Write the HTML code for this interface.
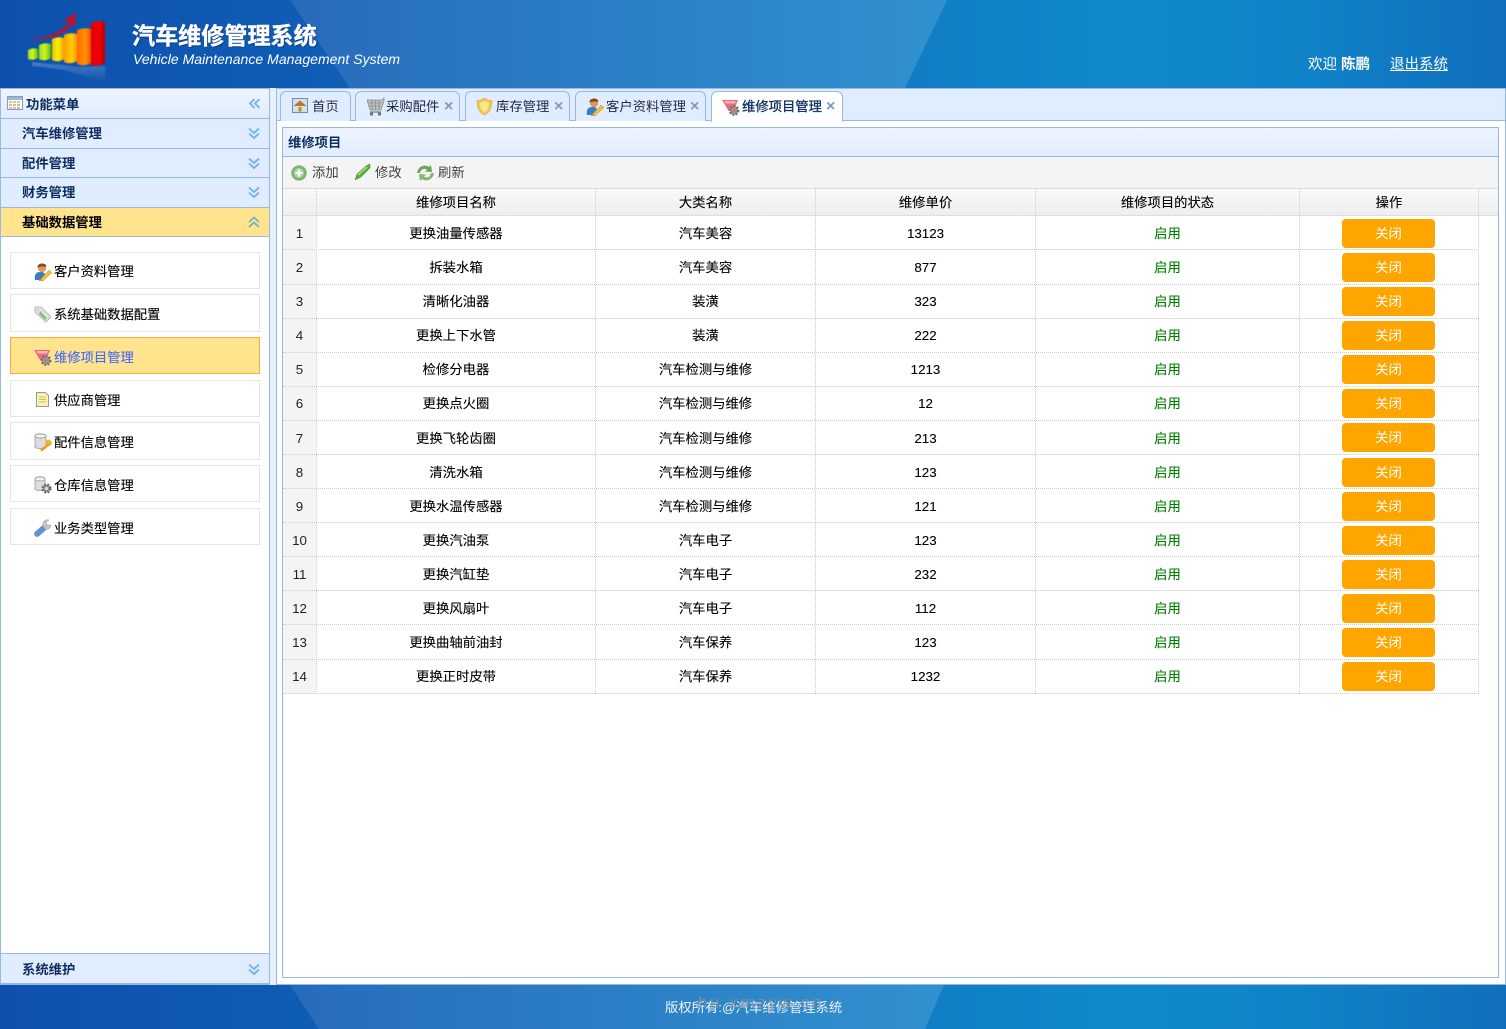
<!DOCTYPE html>
<html lang="zh"><head><meta charset="utf-8"><title>汽车维修管理系统</title>
<style>
*{box-sizing:border-box}
html,body{margin:0;padding:0;width:1506px;height:1029px;overflow:hidden;background:#fff;font-family:"Liberation Sans","Noto Sans CJK SC",sans-serif;font-size:13.33px;color:#000}
.a{position:absolute;white-space:nowrap}
svg{display:block;overflow:visible}
svg.ic{filter:blur(.3px)}
.hdr{left:0;top:0;width:1506px;height:88px;background:linear-gradient(90deg,#0e50ae 0,#0f5cb4 300px,#1089cc 1120px,#1083c9 1300px,#106fbc 1506px)}
.mi{left:1px;width:268px;height:29px;background:#e0ecff;border-bottom:1px solid #95b8e7;font-weight:bold;color:#0e2d5f;line-height:28px;padding-left:21px;padding-top:1px}
.it{left:10px;width:250px;border:1px solid #e5e5e5;background:#fff;line-height:36px;padding-left:43px;padding-top:2px;height:37px;color:#000;letter-spacing:-.04px;-webkit-text-stroke:.12px #000}
.tab{top:91px;height:30px;border:1px solid #95b8e7;border-bottom:0;border-radius:6px 6px 0 0;background:#e0ecff;line-height:29px;color:#1f2a44}
.x{position:absolute;top:7px;line-height:15px;color:#7f99be;font-weight:bold;font-size:16px;font-family:"Liberation Sans",sans-serif;-webkit-text-stroke:0}
.c{position:absolute;text-align:center;line-height:20px;height:20px;margin-top:1px;-webkit-text-stroke:.12px #000}
.vl{position:absolute;top:189px;height:505px;width:0;border-left:1px dotted #ccc}
.hl{position:absolute;left:283px;width:1196px;height:0;border-top:1px dotted #ccc}
.btn{position:absolute;left:1342px;width:93px;height:29px;background:#ffa500;border-radius:4px;color:#fff;text-align:center;line-height:29px}
.c.g{color:#008000;-webkit-text-stroke:.12px #008000}
.n{position:absolute;left:283px;width:33px;text-align:center;color:#222;height:20px;line-height:20px;margin-top:1px}
</style></head><body>

<div class="a hdr"></div>
<svg class="a" style="left:0;top:0" width="1506" height="88"><defs><linearGradient id="ov" x1="0" x2="1" y1="0" y2="0"><stop offset="0" stop-color="#fff" stop-opacity=".1"/><stop offset="1" stop-color="#fff" stop-opacity=".14"/></linearGradient></defs><polygon points="290,0 947,0 905,88 350,88" fill="url(#ov)"/></svg>

<!-- logo -->
<svg class="a" style="left:20px;top:8px;filter:blur(.6px)" width="100" height="80" viewBox="0 0 100 80">
<defs>
<linearGradient id="l1" x1="0" x2="1"><stop offset="0" stop-color="#9be018"/><stop offset=".5" stop-color="#d0f420"/><stop offset="1" stop-color="#5cb810"/></linearGradient>
<linearGradient id="l2" x1="0" x2="1"><stop offset="0" stop-color="#e8c000"/><stop offset=".5" stop-color="#fff000"/><stop offset="1" stop-color="#f0a000"/></linearGradient>
<linearGradient id="l3" x1="0" x2="1"><stop offset="0" stop-color="#ff9a00"/><stop offset=".6" stop-color="#ffd000"/><stop offset="1" stop-color="#ff9000"/></linearGradient>
<linearGradient id="l4" x1="0" x2="1"><stop offset="0" stop-color="#ff6a00"/><stop offset=".6" stop-color="#ff9400"/><stop offset="1" stop-color="#f05000"/></linearGradient>
<linearGradient id="l5" x1="0" x2="1"><stop offset="0" stop-color="#e00010"/><stop offset=".6" stop-color="#f40000"/><stop offset="1" stop-color="#b80000"/></linearGradient>
<linearGradient id="rf" x1="0" x2="0" y1="0" y2="1"><stop offset="0" stop-color="#fff" stop-opacity=".24"/><stop offset="1" stop-color="#fff" stop-opacity="0"/></linearGradient>
</defs>
<path d="M8 31 C28 30 42 24 49 14 L44 12 L56 5 L55 19 L52 16 C44 27 28 33 8 31Z" fill="#c0102c"/>
<path d="M8 42 Q13 39 18 41 L18 50 Q13 53 8 51Z" fill="url(#l1)"/>
<path d="M19 37 Q25 34 31 36 L31 50 Q25 54 19 51Z" fill="url(#l1)"/>
<path d="M32 31 Q38 28 44 30 L44 51 Q38 55 32 52Z" fill="url(#l2)"/>
<path d="M44 27 Q50 24 57 26 L57 53 Q50 57 44 54Z" fill="url(#l3)"/>
<path d="M57 22 Q64 19 71 21 L71 55 Q64 59 57 56Z" fill="url(#l4)"/>
<path d="M71 15 Q78 12 85 14 L85 55 Q78 59 71 57Z" fill="url(#l5)"/>
<path d="M12 54 L30 56 L44 57 L57 59 L85 58 L85 74 L71 70 L44 62 L12 58Z" fill="url(#rf)"/>
</svg>

<div class="a" style="left:132px;top:19px;font-size:23.1px;font-weight:bold;color:#fff;line-height:34px;-webkit-text-stroke:.4px #fff;text-shadow:1px 1px 1px rgba(0,30,90,.5)">汽车维修管理系统</div>
<div class="a" style="left:133px;top:50px;font-size:14px;font-style:italic;color:#fff;line-height:19px;letter-spacing:.04px">Vehicle Maintenance Management System</div>
<div class="a" style="left:1308px;top:55px;color:#fff;line-height:20px;font-size:14.5px">欢迎&nbsp;<b>陈鹏</b></div>
<div class="a" style="left:1390px;top:55px;color:#fff;line-height:20px;font-size:14.5px;text-decoration:underline">退出系统</div>

<!-- frame bg -->
<div class="a" style="left:0;top:88px;width:1506px;height:897px;background:#e8f0fc"></div>
<div class="a" style="left:0;top:88px;width:270px;height:897px;background:#fff;border:1px solid #95b8e7"></div>
<div class="a" style="left:276px;top:88px;width:1230px;height:897px;background:#fff;border:1px solid #95b8e7"></div>

<!-- sidebar -->
<div class="a mi" style="top:89px;height:30px;padding-left:25px;line-height:29px;background:linear-gradient(180deg,#eff5ff,#e0ecff)">功能菜单</div>
<svg class="a ic" style="left:7px;top:96px" width="16" height="15" viewBox="0 0 16 15"><rect x=".5" y=".5" width="15" height="13" fill="#fff" stroke="#8a9db8"/><rect x="1" y="1" width="14" height="3" fill="#9db8dc"/><path d="M2 5h3v2H2zM6 5h3v2H6zM10 5h3v2h-3z" fill="#f2c27a"/><path d="M2 8h3v2H2zM6 8h3v2H6zM10 8h3v2h-3z" fill="#a8cfa0"/><path d="M2 11h3v2H2zM6 11h3v2H6zM10 11h3v2h-3z" fill="#e8b0b8"/></svg>
<svg class="a" style="left:249px;top:98px" width="12" height="12" viewBox="0 0 12 12"><path d="M5.500 1 1 5.500 5.500 10M10.500 1 6 5.500 10.500 10" fill="none" stroke="#6fb0f0" stroke-width="1.800"/></svg>

<div class="a mi" style="top:119px;height:30px;line-height:28px">汽车维修管理</div>
<div class="a mi" style="top:149px;height:29px;line-height:28px">配件管理</div>
<div class="a mi" style="top:178px;height:30px;line-height:28px">财务管理</div>
<div class="a mi" style="top:208px;height:29px;line-height:28px;background:#ffe48d;color:#000">基础数据管理</div>
<svg class="a" style="left:248px;top:127px" width="12" height="13" viewBox="0 0 12 13"><path d="M1 1.500 6 6l5-4.500M1 6.500 6 11l5-4.500" fill="none" stroke="#6fb0f0" stroke-width="1.800"/></svg>
<svg class="a" style="left:248px;top:157px" width="12" height="13" viewBox="0 0 12 13"><path d="M1 1.500 6 6l5-4.500M1 6.500 6 11l5-4.500" fill="none" stroke="#6fb0f0" stroke-width="1.800"/></svg>
<svg class="a" style="left:248px;top:186px" width="12" height="13" viewBox="0 0 12 13"><path d="M1 1.500 6 6l5-4.500M1 6.500 6 11l5-4.500" fill="none" stroke="#6fb0f0" stroke-width="1.800"/></svg>
<svg class="a" style="left:248px;top:216px" width="12" height="13" viewBox="0 0 12 13"><path d="M1 6 6 1.500 11 6M1 11 6 6.500 11 11" fill="none" stroke="#7bb0c8" stroke-width="1.800"/></svg>

<div class="a it" style="top:252px;padding-top:1px">客户资料管理</div>
<div class="a it" style="top:294px;height:38px">系统基础数据配置</div>
<div class="a it" style="top:337px;background:#ffe48d;border-color:#ffab3f;color:#416aff;-webkit-text-stroke:.12px #416aff">维修项目管理</div>
<div class="a it" style="top:380px">供应商管理</div>
<div class="a it" style="top:422px;height:38px">配件信息管理</div>
<div class="a it" style="top:465px">仓库信息管理</div>
<div class="a it" style="top:508px">业务类型管理</div>

<!-- sidebar icons -->
<svg class="a ic" style="left:34px;top:263px" width="18" height="18" viewBox="0 0 18 18"><path d="M1 17c-1-5 1-8 5-8h3l3 3-4 5Z" fill="#3d7cc4"/><circle cx="8" cy="5" r="4.200" fill="#d89a60"/><path d="M3.500 4.500C3 0 11-1 12.500 3c-.5 1-2 .5-4 .5S5 4 3.500 4.500Z" fill="#8a4a14"/><path d="M6 17 15 7l3 2.500L9 18Z" fill="#f0c040" stroke="#c4942a" stroke-width=".5"/><path d="M5 18l1-3 2.500 2.500Z" fill="#c08030"/></svg>
<svg class="a ic" style="left:34px;top:306px" width="18" height="17" viewBox="0 0 18 17"><path d="M1 1h6l10 10-5 5L1 6Z" fill="#dfe6df" stroke="#bbb"/><path d="M6 5l7 7-2 2-6-6Z" fill="#8fbe7a"/><circle cx="3.500" cy="3.500" r="1" fill="#fff" stroke="#999" stroke-width=".5"/></svg>
<svg class="a ic" style="left:34px;top:349px" width="19" height="18" viewBox="0 0 19 18"><path d="M0 1h16l-4 10H6Z" fill="#ef6a78"/><path d="M2 2h12l-1 2.500H4Z" fill="#f9b0b8"/><circle cx="12" cy="11.500" r="4.200" fill="#9a9a9a" stroke="#6e6e6e" stroke-width="2.500" stroke-dasharray="1.800 1.400"/><circle cx="12" cy="11.500" r="1.600" fill="#d9745c"/></svg>
<svg class="a ic" style="left:36px;top:392px" width="14" height="15" viewBox="0 0 14 15"><path d="M.5.500h9l3 3v11H.500Z" fill="#fbf3b0" stroke="#999"/><path d="M3 5h7M3 7.500h7M3 10h7" stroke="#c9bd6a"/></svg>
<svg class="a ic" style="left:34px;top:433px" width="18" height="19" viewBox="0 0 18 19"><path d="M1 3c0-3 11-3 11 0v11c0 2-11 2-11 0Z" fill="#dcdcdc" stroke="#aaa"/><ellipse cx="6.500" cy="3" rx="5.500" ry="2" fill="#f4f4f4" stroke="#aaa"/><circle cx="14.500" cy="10" r="3.200" fill="#eeb030"/><path d="M13 11 6 17l2 1.500 7-6Z" fill="#e8a020"/></svg>
<svg class="a ic" style="left:34px;top:476px" width="18" height="18" viewBox="0 0 18 18"><path d="M1 3c0-3 10-3 10 0v10c0 2-10 2-10 0Z" fill="#dcdcdc" stroke="#aaa"/><ellipse cx="6" cy="3" rx="5" ry="2" fill="#f4f4f4" stroke="#aaa"/><circle cx="12.500" cy="12.500" r="3.800" fill="#999" stroke="#666" stroke-width="2.500" stroke-dasharray="1.800 1.300"/><circle cx="12.500" cy="12.500" r="1.500" fill="#e4e4e4"/></svg>
<svg class="a ic" style="left:34px;top:519px" width="18" height="18" viewBox="0 0 18 18"><path d="M1 13 9 6l4 4-8 7c-3 2-6-1-4-4Z" fill="#5f92d8" stroke="#7a90aa" stroke-width=".5"/><path d="M9 7c-1-4 2-7 6-6l-3 2.500 1 2.500 4 0c0 3-3 5.500-6 4Z" fill="#c4c4c4" stroke="#999" stroke-width=".5"/></svg>

<div class="a" style="left:1px;top:953px;width:268px;height:31px;background:#e0ecff;border-top:1px solid #95b8e7;border-bottom:1px solid #95b8e7;font-weight:bold;color:#0e2d5f;line-height:29px;padding-left:21px;padding-top:1px">系统维护</div>
<svg class="a" style="left:248px;top:963px" width="12" height="13" viewBox="0 0 12 13"><path d="M1 1.500 6 6l5-4.500M1 6.500 6 11l5-4.500" fill="none" stroke="#6fb0f0" stroke-width="1.800"/></svg>

<!-- tabs bar -->
<div class="a" style="left:277px;top:89px;width:1228px;height:32px;background:#e0ecff;border-bottom:1px solid #95b8e7"></div>
<div class="a tab" style="left:280px;width:71px;padding-left:31px">首页</div>
<div class="a tab" style="left:355px;width:105px;padding-left:30px">采购配件<span class="x" style="left:88px">×</span></div>
<div class="a tab" style="left:465px;width:105px;padding-left:30px">库存管理<span class="x" style="left:88px">×</span></div>
<div class="a tab" style="left:575px;width:131px;padding-left:30px">客户资料管理<span class="x" style="left:114px">×</span></div>
<div class="a tab" style="left:711px;width:132px;height:31px;padding-left:30px;background:#fff;color:#0e2d5f;-webkit-text-stroke:.3px #0e2d5f">维修项目管理<span class="x" style="left:114px">×</span></div>

<!-- tab icons -->
<svg class="a ic" style="left:292px;top:98px" width="16" height="15" viewBox="0 0 16 15"><rect x=".5" y=".5" width="15" height="14" fill="#cfe0f2" stroke="#6a8fb8"/><path d="M1.500 8 8 2.500 14.500 8Z" fill="#c07030"/><rect x="3.500" y="8" width="9" height="5.500" fill="#f0e2b0"/><rect x="6.500" y="9" width="3" height="4.500" fill="#80a060"/></svg>
<svg class="a ic" style="left:366px;top:98px" width="19" height="18" viewBox="0 0 19 18"><path d="M1 2h15l2-2v3l-3 9H4Z" fill="#c0c4c0" stroke="#8a8a8a" stroke-width=".7"/><path d="M2 5h14M3 8h12M6 2v10M9.500 2v10M13 2v10" stroke="#8e8e8e" stroke-width=".8"/><path d="M4 14h11" stroke="#777" stroke-width="1.200"/><circle cx="5.500" cy="16" r="1.700" fill="#777"/><circle cx="13.500" cy="16" r="1.700" fill="#777"/></svg>
<svg class="a ic" style="left:477px;top:98px" width="15" height="17" viewBox="0 0 15 17"><path d="M7.500 0C10 2 12 2.500 15 2.500c0 7-2 12-7.500 14.500C2 14.500 0 9.500 0 2.500 3 2.500 5 2 7.500 0Z" fill="#eec850" stroke="#d8a830" stroke-width=".6"/><path d="M7.500 3c1.500 1 3 1.500 4.500 1.500 0 5-1.500 8-4.500 10C4.500 12.500 3 9.500 3 4.500 4.500 4.500 6 4 7.500 3Z" fill="#fbe78a"/></svg>
<svg class="a ic" style="left:586px;top:98px" width="18" height="18" viewBox="0 0 18 18"><path d="M1 17c-1-5 1-8 5-8h3l3 3-4 5Z" fill="#3d7cc4"/><circle cx="8" cy="5" r="4.200" fill="#d89a60"/><path d="M3.500 4.500C3 0 11-1 12.500 3c-.5 1-2 .5-4 .5S5 4 3.500 4.500Z" fill="#8a4a14"/><path d="M6 17 15 7l3 2.500L9 18Z" fill="#f0c040" stroke="#c4942a" stroke-width=".5"/><path d="M5 18l1-3 2.500 2.500Z" fill="#c08030"/></svg>
<svg class="a ic" style="left:722px;top:99px" width="19" height="18" viewBox="0 0 19 18"><path d="M0 1h16l-4 10H6Z" fill="#ef6a78"/><path d="M2 2h12l-1 2.500H4Z" fill="#f9b0b8"/><circle cx="12" cy="11.500" r="4.200" fill="#9a9a9a" stroke="#6e6e6e" stroke-width="2.500" stroke-dasharray="1.800 1.400"/><circle cx="12" cy="11.500" r="1.600" fill="#d9745c"/></svg>

<!-- panel -->
<div class="a" style="left:282px;top:127px;width:1217px;height:851px;border:1px solid #95b8e7;background:#fff"></div>
<div class="a" style="left:283px;top:128px;width:1215px;height:29px;background:linear-gradient(180deg,#eff5ff,#e0ecff);border-bottom:1px solid #95b8e7;font-weight:bold;color:#0e2d5f;line-height:28px;padding-left:5px;padding-top:1px">维修项目</div>
<div class="a" style="left:283px;top:157px;width:1215px;height:32px;background:#f4f4f4;border-bottom:1px solid #ddd"></div>
<svg class="a ic" style="left:291px;top:165px" width="16" height="16" viewBox="0 0 16 16"><circle cx="8" cy="8" r="7.500" fill="#7cb472" stroke="#9aaa9a" stroke-width=".6"/><circle cx="8" cy="8" r="5" fill="#a9d69c"/><path d="M8 4.500v7M4.500 8h7" stroke="#fff" stroke-width="2.200"/></svg>
<div class="a" style="left:312px;top:163px;line-height:20px;color:#444">添加</div>
<svg class="a ic" style="left:355px;top:164px" width="16" height="16" viewBox="0 0 16 16"><path d="M0 16 2 10 11 2 15 0 15 4 6 13Z" fill="#5bab3e" stroke="#3f8a2a" stroke-width=".5"/><path d="M3 11 12 3" stroke="#b5e88e" stroke-width="1.200"/></svg>
<div class="a" style="left:375px;top:163px;line-height:20px;color:#444">修改</div>
<svg class="a ic" style="left:417px;top:165px" width="17" height="16" viewBox="0 0 17 16"><path d="M0 8C1 1 8-1 12 2l2-2 1 7-7-.500 2-2C7 3 4 4 3 8Z" fill="#6aa65a"/><path d="M17 8c-1 7-8 9-12 6l-2 2-1-7 7 .500-2 2c3 2 6 1 7-3.500Z" fill="#84b86e"/></svg>
<div class="a" style="left:438px;top:163px;line-height:20px;color:#444">刷新</div>

<!-- table -->
<div class="a" style="left:283px;top:189px;width:1196px;height:27px;background:linear-gradient(180deg,#f9f9f9,#eee);border-bottom:1px solid #ddd"></div>
<div class="a" style="left:1479px;top:189px;width:19px;height:27px;background:linear-gradient(180deg,#f9f9f9,#eee);border-bottom:1px solid #ddd"></div>
<div class="a" style="left:283px;top:216px;width:33px;height:478px;background:#f4f4f4"></div>
<div class="vl" style="left:316px"></div><div class="vl" style="left:595px"></div><div class="vl" style="left:815px"></div><div class="vl" style="left:1035px"></div><div class="vl" style="left:1299px"></div><div class="vl" style="left:1478px"></div>
<div class="hl" style="top:249px"></div><div class="hl" style="top:284px"></div><div class="hl" style="top:318px"></div><div class="hl" style="top:352px"></div><div class="hl" style="top:386px"></div><div class="hl" style="top:420px"></div><div class="hl" style="top:454px"></div><div class="hl" style="top:488px"></div><div class="hl" style="top:522px"></div><div class="hl" style="top:556px"></div><div class="hl" style="top:590px"></div><div class="hl" style="top:624px"></div><div class="hl" style="top:659px"></div><div class="hl" style="top:693px"></div>

<div class="c" style="left:317px;width:278px;top:192px">维修项目名称</div>
<div class="c" style="left:596px;width:219px;top:192px">大类名称</div>
<div class="c" style="left:816px;width:219px;top:192px">维修单价</div>
<div class="c" style="left:1036px;width:263px;top:192px">维修项目的状态</div>
<div class="c" style="left:1300px;width:178px;top:192px">操作</div>

<div class="n" style="top:223px">1</div><div class="c" style="left:317px;width:278px;top:223px">更换油量传感器</div><div class="c" style="left:596px;width:219px;top:223px">汽车美容</div><div class="c" style="left:816px;width:219px;top:223px">13123</div><div class="c g" style="left:1036px;width:263px;top:223px">启用</div><div class="btn" style="top:219px">关闭</div>
<div class="n" style="top:257px">2</div><div class="c" style="left:317px;width:278px;top:257px">拆装水箱</div><div class="c" style="left:596px;width:219px;top:257px">汽车美容</div><div class="c" style="left:816px;width:219px;top:257px">877</div><div class="c g" style="left:1036px;width:263px;top:257px">启用</div><div class="btn" style="top:253px">关闭</div>
<div class="n" style="top:291px">3</div><div class="c" style="left:317px;width:278px;top:291px">清晰化油器</div><div class="c" style="left:596px;width:219px;top:291px">装潢</div><div class="c" style="left:816px;width:219px;top:291px">323</div><div class="c g" style="left:1036px;width:263px;top:291px">启用</div><div class="btn" style="top:287px">关闭</div>
<div class="n" style="top:325px">4</div><div class="c" style="left:317px;width:278px;top:325px">更换上下水管</div><div class="c" style="left:596px;width:219px;top:325px">装潢</div><div class="c" style="left:816px;width:219px;top:325px">222</div><div class="c g" style="left:1036px;width:263px;top:325px">启用</div><div class="btn" style="top:321px">关闭</div>
<div class="n" style="top:359px">5</div><div class="c" style="left:317px;width:278px;top:359px">检修分电器</div><div class="c" style="left:596px;width:219px;top:359px">汽车检测与维修</div><div class="c" style="left:816px;width:219px;top:359px">1213</div><div class="c g" style="left:1036px;width:263px;top:359px">启用</div><div class="btn" style="top:355px">关闭</div>
<div class="n" style="top:393px">6</div><div class="c" style="left:317px;width:278px;top:393px">更换点火圈</div><div class="c" style="left:596px;width:219px;top:393px">汽车检测与维修</div><div class="c" style="left:816px;width:219px;top:393px">12</div><div class="c g" style="left:1036px;width:263px;top:393px">启用</div><div class="btn" style="top:389px">关闭</div>
<div class="n" style="top:428px">7</div><div class="c" style="left:317px;width:278px;top:428px">更换飞轮齿圈</div><div class="c" style="left:596px;width:219px;top:428px">汽车检测与维修</div><div class="c" style="left:816px;width:219px;top:428px">213</div><div class="c g" style="left:1036px;width:263px;top:428px">启用</div><div class="btn" style="top:423px">关闭</div>
<div class="n" style="top:462px">8</div><div class="c" style="left:317px;width:278px;top:462px">清洗水箱</div><div class="c" style="left:596px;width:219px;top:462px">汽车检测与维修</div><div class="c" style="left:816px;width:219px;top:462px">123</div><div class="c g" style="left:1036px;width:263px;top:462px">启用</div><div class="btn" style="top:458px">关闭</div>
<div class="n" style="top:496px">9</div><div class="c" style="left:317px;width:278px;top:496px">更换水温传感器</div><div class="c" style="left:596px;width:219px;top:496px">汽车检测与维修</div><div class="c" style="left:816px;width:219px;top:496px">121</div><div class="c g" style="left:1036px;width:263px;top:496px">启用</div><div class="btn" style="top:492px">关闭</div>
<div class="n" style="top:530px">10</div><div class="c" style="left:317px;width:278px;top:530px">更换汽油泵</div><div class="c" style="left:596px;width:219px;top:530px">汽车电子</div><div class="c" style="left:816px;width:219px;top:530px">123</div><div class="c g" style="left:1036px;width:263px;top:530px">启用</div><div class="btn" style="top:526px">关闭</div>
<div class="n" style="top:564px">11</div><div class="c" style="left:317px;width:278px;top:564px">更换汽缸垫</div><div class="c" style="left:596px;width:219px;top:564px">汽车电子</div><div class="c" style="left:816px;width:219px;top:564px">232</div><div class="c g" style="left:1036px;width:263px;top:564px">启用</div><div class="btn" style="top:560px">关闭</div>
<div class="n" style="top:598px">12</div><div class="c" style="left:317px;width:278px;top:598px">更换风扇叶</div><div class="c" style="left:596px;width:219px;top:598px">汽车电子</div><div class="c" style="left:816px;width:219px;top:598px">112</div><div class="c g" style="left:1036px;width:263px;top:598px">启用</div><div class="btn" style="top:594px">关闭</div>
<div class="n" style="top:632px">13</div><div class="c" style="left:317px;width:278px;top:632px">更换曲轴前油封</div><div class="c" style="left:596px;width:219px;top:632px">汽车保养</div><div class="c" style="left:816px;width:219px;top:632px">123</div><div class="c g" style="left:1036px;width:263px;top:632px">启用</div><div class="btn" style="top:628px">关闭</div>
<div class="n" style="top:666px">14</div><div class="c" style="left:317px;width:278px;top:666px">更换正时皮带</div><div class="c" style="left:596px;width:219px;top:666px">汽车保养</div><div class="c" style="left:816px;width:219px;top:666px">1232</div><div class="c g" style="left:1036px;width:263px;top:666px">启用</div><div class="btn" style="top:662px">关闭</div>

<!-- footer -->
<div class="a" style="left:0;top:985px;width:1506px;height:44px;background:linear-gradient(90deg,#0e50ae 0,#0f5cb4 300px,#1089cc 1120px,#1083c9 1300px,#106fbc 1506px)"></div>
<svg class="a" style="left:0;top:985px" width="1506" height="44"><polygon points="290,0 944,0 925,44 319,44" fill="url(#ov)"/></svg>
<div class="a" style="left:665px;top:998px;color:#eef4fb;line-height:20px">版权所有:@汽车维修管理系统</div>
<div class="a" style="left:698px;top:993px;font-size:17px;line-height:20px;color:#8c8f96;letter-spacing:2.600px;opacity:.8">hu.xmzyw.cn</div>
</body></html>
